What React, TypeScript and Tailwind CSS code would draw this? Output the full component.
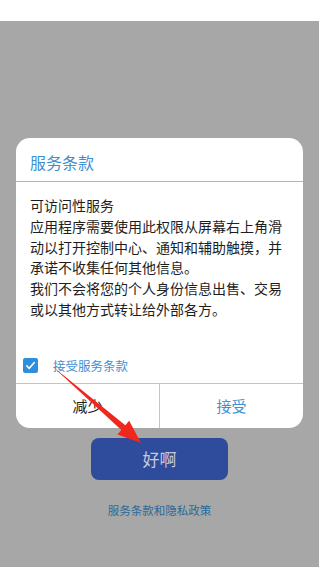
import { useState } from 'react';

const font = { fontFamily: '"Noto Sans CJK SC", "Noto Sans", sans-serif' };

function CheckBox({ checked, onToggle }: { checked: boolean; onToggle: () => void }) {
  return (
    <button
      onClick={onToggle}
      className={`flex h-[15px] w-[15px] items-center justify-center rounded-[2px] ${checked ? 'bg-[#2f8fdc]' : 'border border-gray-400 bg-white'}`}
    >
      {checked && (
        <svg viewBox="0 0 16 16" className="h-[13px] w-[13px]" fill="none" stroke="white" strokeWidth="2" strokeLinecap="round" strokeLinejoin="round">
          <path d="M3.5 8.5l3 3 6-7" />
        </svg>
      )}
    </button>
  );
}

// flecha roja de la captura
function RedArrow() {
  return (
    <svg className="pointer-events-none absolute left-0 top-0" width="319" height="567" viewBox="0 0 319 567">
      <polygon points="52,366 125.3,425.3 129.2,420.8 141,443 117.4,434.4 121.3,429.9" fill="#f0271c" />
    </svg>
  );
}

export default function App() {
  const [accepted, setAccepted] = useState(true);

  return (
    <div className="relative flex h-[567px] w-[319px] flex-col overflow-hidden" style={font}>
      <div className="h-[21px] bg-white" />
      <div className="flex flex-1 flex-col bg-[#a7a7a7] px-4 pt-[117px]">
        <div className="overflow-hidden rounded-[14px] bg-white">
          <div className="flex h-[43px] items-center px-[14px] pt-[4px] text-[16px] text-[#3d8fd1]">服务条款</div>
          <div className="h-px bg-[#b4b4b4]" />
          <div className="h-[137px] px-[14px] pt-[13px] text-[14px] leading-[20.8px] text-[#1e1e1e]">
            <p>可访问性服务</p>
            <p>应用程序需要使用此权限从屏幕右上角滑动以打开控制中心、通知和辅助触摸，并承诺不收集任何其他信息。</p>
            <p>我们不会将您的个人身份信息出售、交易或以其他方式转让给外部各方。</p>
          </div>
          <div className="mt-[39px] mb-[10px] flex h-[15px] items-center gap-[15px] pl-[7px]">
            <CheckBox checked={accepted} onToggle={() => setAccepted(!accepted)} />
            <span className="text-[12.5px] leading-[15px] text-[#3d8fd1]">接受服务条款</span>
          </div>
          <div className="h-px bg-[#c4c4c4]" />
          <div className="flex h-[44px]">
            <button className="flex-1 text-[15px] text-[#1e1e1e]">减少</button>
            <div className="w-px bg-[#c4c4c4]" />
            <button className="flex-1 text-[15px] text-[#3d8fd1]">接受</button>
          </div>
        </div>
        <button className="mx-auto mt-[10px] h-[42px] w-[137px] rounded-[8px] bg-[#2f4c9c] text-[17px] text-[#c7cad6]">好啊</button>
        <p className="mt-[22px] text-center text-[11.5px] text-[#2a6a9a]">服务条款和隐私政策</p>
      </div>
      <RedArrow />
    </div>
  );
}
